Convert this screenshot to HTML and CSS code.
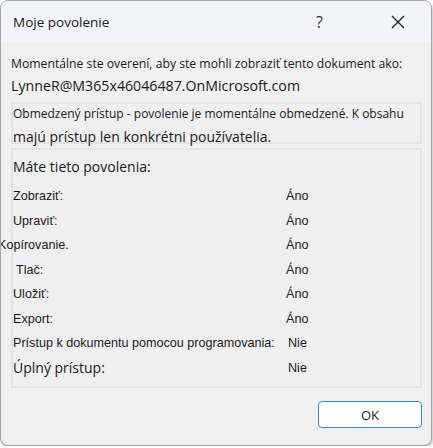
FILE: index.html
```html
<!DOCTYPE html>
<html lang="sk">
<head>
    <meta charset="UTF-8">
    <title>Moje povolenie</title>
    <link rel="stylesheet" href="styles.css">
</head>
<body>
    <div class="dialog">
        <div class="titlebar">
            <span class="title">Moje povolenie</span>
            <span class="help">?</span>
            <svg class="close" width="16" height="16" viewBox="0 0 16 16">
                <path d="M2 2 L14 14 M14 2 L2 14" stroke="#1a1a1a" stroke-width="1.2" fill="none"/>
            </svg>
        </div>
        <div class="content">
            <p class="intro">Momentálne ste overení, aby ste mohli zobraziť tento dokument ako:</p>
            <p class="user">LynneR@M365x46046487.OnMicrosoft.com</p>
            <div class="box notice">
                <p class="small">Obmedzený prístup - povolenie je momentálne obmedzené. K obsahu</p>
                <p class="big">majú prístup len konkrétni používatelia.</p>
            </div>
            <div class="box perms">
                <p class="heading">Máte tieto povolenia:</p>
                <div class="row"><span class="label">Zobraziť:</span><span class="value">Áno</span></div>
                <div class="row"><span class="label">Upraviť:</span><span class="value">Áno</span></div>
                <div class="row"><span class="label shift">Kopírovanie.</span><span class="value">Áno</span></div>
                <div class="row"><span class="label nudge">Tlač:</span><span class="value">Áno</span></div>
                <div class="row"><span class="label">Uložiť:</span><span class="value">Áno</span></div>
                <div class="row"><span class="label">Export:</span><span class="value">Áno</span></div>
                <div class="row"><span class="label">Prístup k dokumentu pomocou programovania:</span><span class="value no">Nie</span></div>
                <div class="row"><span class="label big">Úplný prístup:</span><span class="value no">Nie</span></div>
            </div>
            <div class="footer">
                <button class="ok">OK</button>
            </div>
        </div>
    </div>
</body>
</html>
```

FILE: styles.css
```css
* {
    margin: 0;
    padding: 0;
    box-sizing: border-box;
}

body {
    background: #fff;
    font-family: 'Open Sans', 'Liberation Sans', sans-serif;
    color: #1a1a1a;
}

.dialog {
    width: 432px;
    height: 446px;
    border: 1px solid #a6a6a6;
    border-radius: 8px;
    overflow: hidden;
    background: #f0f0f0;
    box-shadow: 1px 2px 3px rgba(0, 0, 0, 0.25);
    display: flex;
    flex-direction: column;
}

.titlebar {
    height: 41px;
    background: #f3f4f9;
    display: flex;
    align-items: center;
    padding: 0 0 0 12px;
}

.title {
    font-size: 13.5px;
    flex: 1;
}

.help {
    font-size: 16px;
    color: #333;
    width: 74px;
}

.close {
    margin-right: 25px;
}

.content {
    padding: 12px 9px 0 10px;
    display: flex;
    flex-direction: column;
}

.intro {
    font-size: 12.2px;
    line-height: 20px;
    white-space: nowrap;
}

.user {
    font-size: 14.2px;
    line-height: 24px;
    margin-bottom: 4px;
}

.box {
    border: 2px solid #e3e3e3;
    background: #efefef;
}

.notice {
    height: 42px;
    padding: 0;
}

.notice .small {
    font-size: 12px;
    line-height: 18px;
    margin-top: 1px;
    white-space: nowrap;
}

.notice .big {
    font-size: 14px;
    line-height: 20px;
    margin-top: 4px;
    white-space: nowrap;
}

.perms {
    margin-top: 4px;
    height: 240px;
    padding: 6px 0 0 0;
}

.heading {
    font-size: 14px;
    line-height: 22px;
    margin-bottom: 6px;
}

.row {
    display: flex;
    height: 24.5px;
    align-items: center;
    font-family: 'Liberation Sans', Arial, sans-serif;
    font-size: 12.6px;
}

.label {
    width: 273px;
    white-space: nowrap;
}

.label.shift {
    margin-left: -15px;
    width: 288px;
}

.label.nudge {
    margin-left: 3px;
    width: 270px;
}

.label.big {
    font-size: 14px;
    font-family: 'Open Sans', 'Liberation Sans', sans-serif;
}

.value.no {
    margin-left: 2px;
}

.footer {
    display: flex;
    justify-content: flex-end;
    padding: 13px 0 0 0;
}

.ok {
    width: 104px;
    height: 27px;
    background: #fdfdfd;
    border: 1px solid #2e87d6;
    border-radius: 4px;
    font-family: 'Open Sans', 'Liberation Sans', sans-serif;
    font-size: 13px;
    color: #1a1a1a;
}
```
